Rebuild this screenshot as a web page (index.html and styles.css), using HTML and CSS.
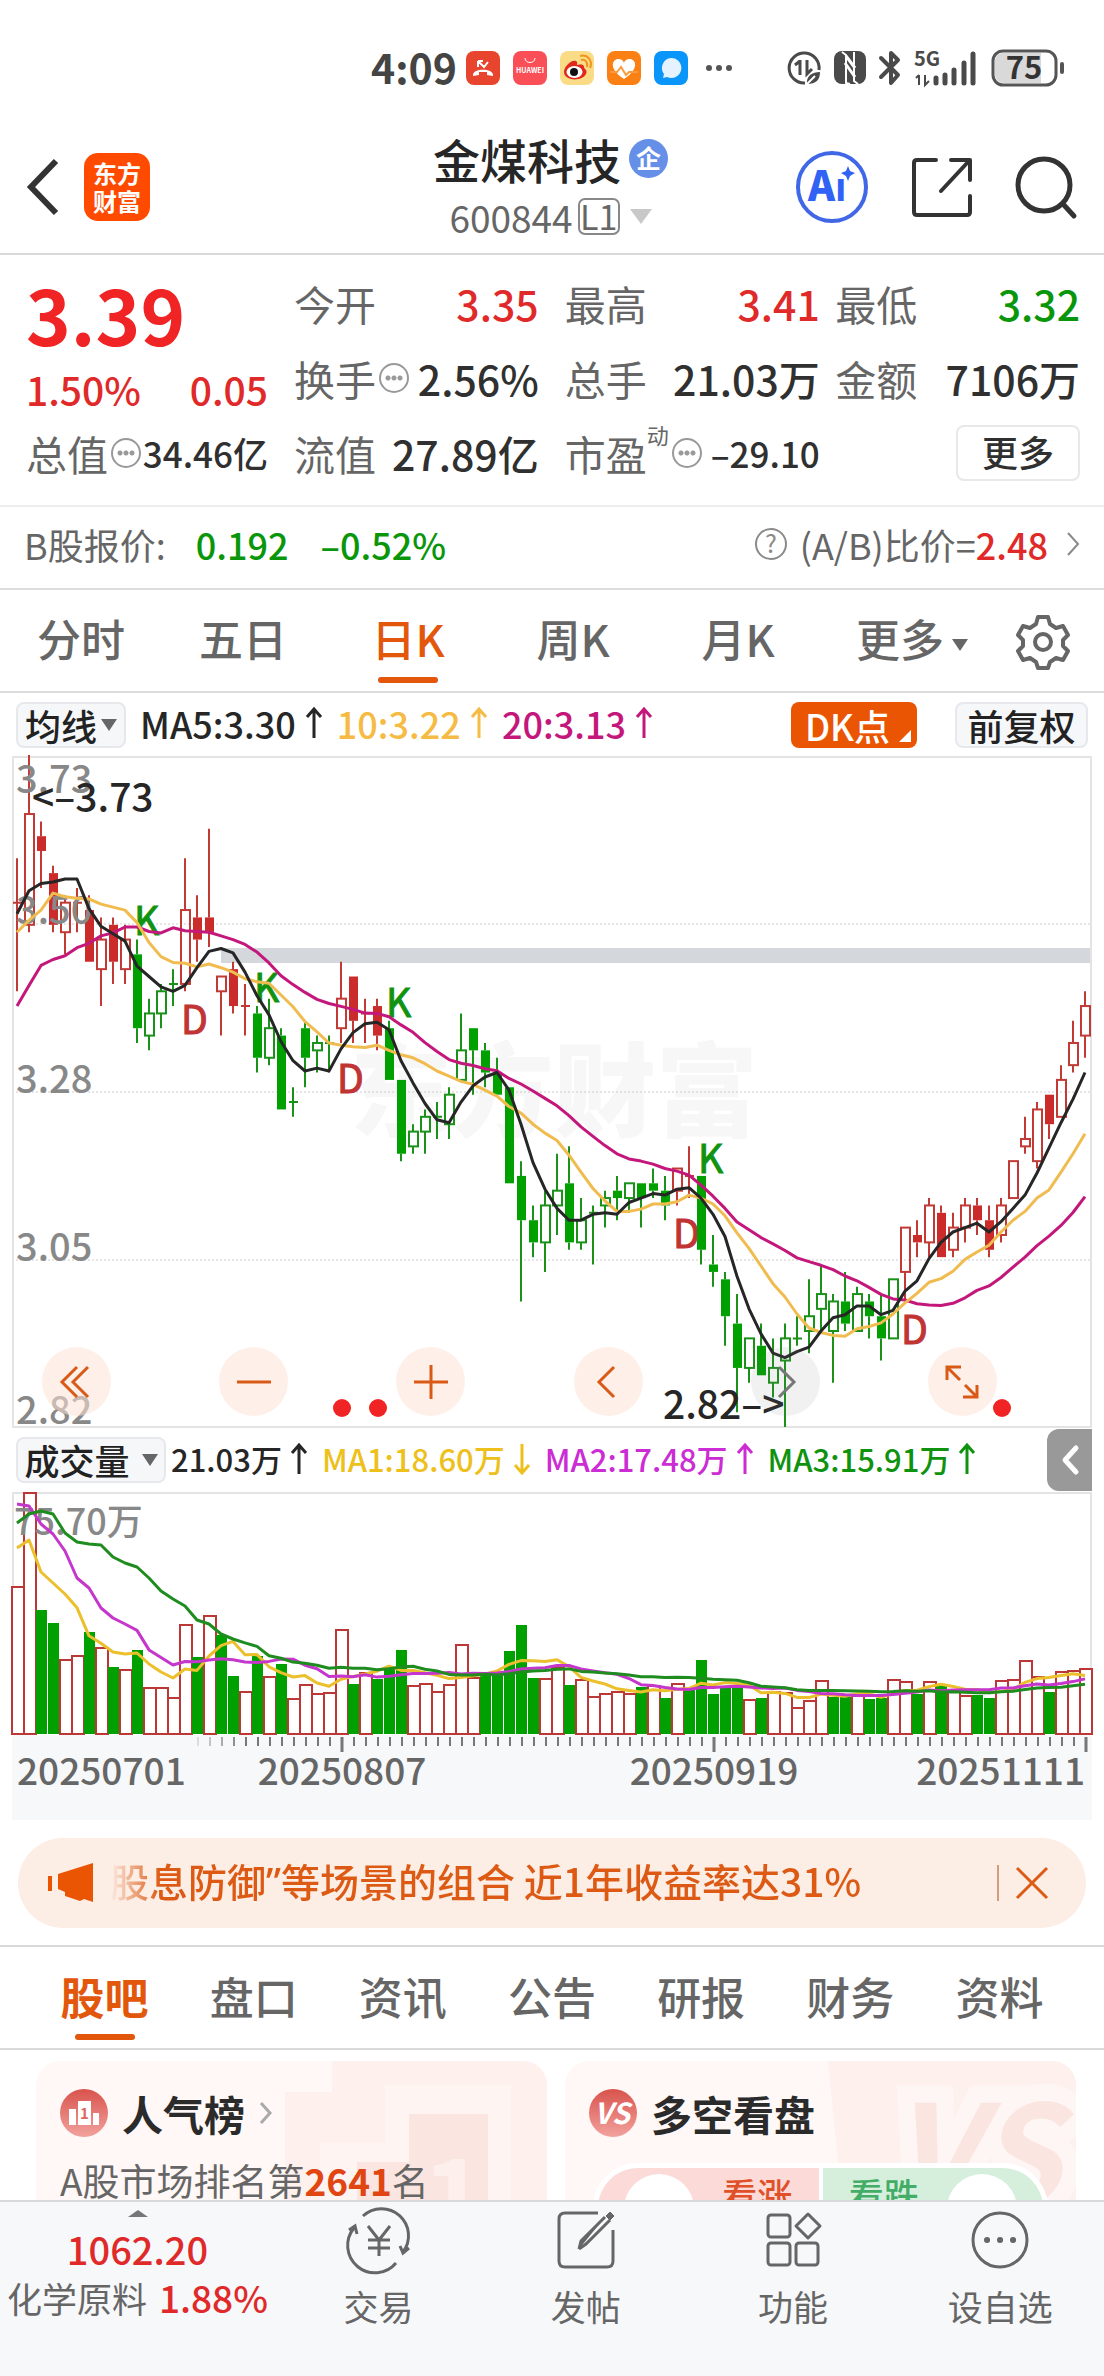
FILE: index.html
```html
<!DOCTYPE html>
<html lang="zh-CN">
<head>
<meta charset="utf-8">
<meta name="viewport" content="width=device-width">
<title>金煤科技 600844</title>
<link rel="stylesheet" href="styles.css">
</head>
<body>
<div class="app">
  <div class="status">
    <span class="clock">4:09</span>
    <svg class="app-ico" viewBox="0 0 34 34"><rect width="34" height="34" rx="8" fill="#e8452f"/><path d="M7 24c0-7 20-7 20 0v1l-6-1v-3h-8v3l-6 1z" fill="#fff"/><path d="M12 10v6M12 10h5M12 10l6 6 4-5" stroke="#fff" stroke-width="2" fill="none"/></svg>
    <svg class="app-ico" viewBox="0 0 34 34"><rect width="34" height="34" rx="8" fill="#fb4f57"/><path d="M12 7c0 6 10 6 10 0" stroke="#fff" fill="none"/><text x="17" y="22" font-size="7" font-weight="700" text-anchor="middle" fill="#fff">HUAWEI</text></svg>
    <svg class="app-ico" viewBox="0 0 34 34"><rect width="34" height="34" rx="8" fill="#fbdc86"/><path d="M4 21c0-6 8-13 12-11 2 1 1 4 1 4s7-2 7 2c0 2 4 3 2 7-4 8-22 7-22-2z" fill="#e0281c"/><ellipse cx="14.500" cy="21" rx="8" ry="6" fill="#fff"/><circle cx="14" cy="21" r="4" fill="#111"/><path d="M21 9c5-1 7 3 6 7M20 5c8-2 13 5 10 12" stroke="#f0951e" stroke-width="2" fill="none"/></svg>
    <svg class="app-ico" viewBox="0 0 34 34"><rect width="34" height="34" rx="8" fill="#fb8013"/><path d="M17 28C0 17 6 7 12 8c4 0 5 4 5 4s1-4 5-4c6-1 12 9-5 20z" fill="#fff"/><path d="M3 21h7l4-5 5 8 3-3h9" stroke="#fb9a3c" stroke-width="2" fill="none"/></svg>
    <svg class="app-ico" viewBox="0 0 34 34"><rect width="34" height="34" rx="8" fill="#0a95fb"/><path d="M17 7a10 10 0 1 1-4 19l-4 1 1-4A10 10 0 0 1 17 7z" fill="#e4f3ff"/></svg>
    <svg class="dots" viewBox="0 0 28 8"><circle cx="4" cy="4" r="3"/><circle cx="14" cy="4" r="3"/><circle cx="24" cy="4" r="3"/></svg>
    <div class="sys">
      <svg width="34" height="34" viewBox="0 0 34 34" fill="none" stroke="#4a4a4a" stroke-width="3"><path d="M18 32A15 15 0 1 1 32 19"/><path d="M13 9v15M8 14l5-4M20 9v14l5-5"/><path d="M20 33c-1-8 5-12 13-12 0 8-4 12-13 12z" fill="#4a4a4a" stroke="none"/><path d="M20 33l8-8" stroke="#fff" stroke-width="2"/></svg>
      <svg width="32" height="34" viewBox="0 0 32 34"><rect width="32" height="33" rx="8" fill="#4a4a4a"/><path d="M8 1l4 3v28l4 1" stroke="#fff" stroke-width="2" fill="none"/><path d="M24 33l-4-3V1" stroke="#fff" stroke-width="2" fill="none"/><path d="M11 12l10 14M12 5l9 12" stroke="#fff" stroke-width="3"/></svg>
      <svg width="22" height="36" viewBox="0 0 22 36" fill="none" stroke="#4a4a4a" stroke-width="4" stroke-linecap="round" stroke-linejoin="round"><path d="M2 8l17 17-7 8V3l7 7L2 27"/></svg>
      <svg width="64" height="36" viewBox="0 0 64 36"><text x="0" y="16" font-size="20" font-weight="700" fill="#4a4a4a">5G</text><path d="M5 25v10M2 28l3-3M11 25v10l4-4" stroke="#4a4a4a" stroke-width="2" fill="none"/><path d="M22 28v5M31 25v8M40 20v13M50 13v20M59 4v29" stroke="#4a4a4a" stroke-width="5" stroke-linecap="round"/></svg>
      <svg width="73" height="38" viewBox="0 0 73 38"><rect x="2" y="2" width="63" height="34" rx="10" fill="#fff" stroke="#555" stroke-width="3"/><path d="M12 4h38v30H12a8 8 0 0 1-8-8V12a8 8 0 0 1 8-8z" fill="#d9d9d9"/><path d="M71 15v8" stroke="#555" stroke-width="4" stroke-linecap="round"/><text x="33" y="30" font-size="31" font-weight="700" text-anchor="middle" fill="#333">75</text></svg>
    </div>
  </div>

  <header class="head">
    <div class="head-left">
      <button class="icon-btn" aria-label="返回"><svg width="36" height="58" viewBox="0 0 36 58" fill="none" stroke="#333" stroke-width="6"><path d="M32 3L7 29l25 26"/></svg></button>
      <div class="logo">东方<br>财富</div>
    </div>
    <div class="head-mid">
      <h1>金煤科技<span class="ent">企</span></h1>
      <div class="code">600844<span class="lv">L1</span><i class="tri light"></i></div>
    </div>
    <div class="head-right">
      <button class="icon-btn" aria-label="AI"><svg width="74" height="74" viewBox="0 0 74 74"><circle cx="37" cy="37" r="34" fill="none" stroke="#4068e6" stroke-width="4"/><text x="13" y="51" class="ai">Aı</text><path d="M53 16l2 5 5 2-5 3-2 5-2-5-5-3 5-2z" fill="#2f62f5"/></svg></button>
      <button class="icon-btn" aria-label="分享"><svg width="62" height="62" viewBox="0 0 62 62" fill="none" stroke="#333" stroke-width="4" stroke-linecap="round" stroke-linejoin="round"><path d="M25 4H6q-3 0-3 3v49q0 3 3 3h50q3 0 3-3V40M40 4h19v20M57 6L30 35"/></svg></button>
      <button class="icon-btn" aria-label="搜索"><svg width="62" height="62" viewBox="0 0 62 62" fill="none" stroke="#333" stroke-width="5"><circle cx="29" cy="29" r="26"/><path d="M48 48l11 12" stroke-linecap="round"/></svg></button>
    </div>
  </header>

  <section class="quote">
    <div class="q-col">
      <div class="price">3.39</div>
      <div class="cell up"><span>1.50%</span><span>0.05</span></div>
      <div class="cell small"><span class="lab">总值<i class="info"></i></span><span>34.46亿</span></div>
    </div>
    <div class="q-col">
      <div class="cell"><span class="lab">今开</span><span class="up">3.35</span></div>
      <div class="cell"><span class="lab">换手<i class="info"></i></span><span>2.56%</span></div>
      <div class="cell"><span class="lab">流值</span><span>27.89亿</span></div>
    </div>
    <div class="q-col">
      <div class="cell"><span class="lab">最高</span><span class="up">3.41</span></div>
      <div class="cell"><span class="lab">总手</span><span>21.03万</span></div>
      <div class="cell small"><span class="lab">市盈<sup>动</sup><i class="info"></i></span><span>–29.10</span></div>
    </div>
    <div class="q-col">
      <div class="cell"><span class="lab">最低</span><span class="down">3.32</span></div>
      <div class="cell"><span class="lab">金额</span><span>7106万</span></div>
      <div class="cell end"><button class="more">更多</button></div>
    </div>
  </section>

  <section class="bshare">
    <span>B股报价:</span><span class="down b1">0.192</span><span class="down b2">–0.52%</span>
    <span class="ratio"><svg width="34" height="34" viewBox="0 0 34 34"><circle cx="17" cy="17" r="15" fill="none" stroke="#8a8a8a" stroke-width="2"/><text x="17" y="26" font-size="25" text-anchor="middle" fill="#8a8a8a">?</text></svg>(A/B)比价=<b class="up">2.48</b><svg class="chev" width="14" height="26" viewBox="0 0 14 26" fill="none" stroke="#8a8a8a" stroke-width="2"><path d="M2 2l10 11L2 24"/></svg></span>
  </section>

  <nav class="ktabs">
    <a href="#m">分时</a><a href="#5">五日</a><a href="#d" class="on">日K</a><a href="#w">周K</a><a href="#mo">月K</a><a href="#more">更多<i class="tri dark"></i></a>
    <button class="icon-btn" aria-label="设置"><svg width="54" height="54" viewBox="0 0 54 54" fill="none" stroke="#666" stroke-width="4" stroke-linejoin="round"><path d="M22 3h10l2 7 6 4 7-2 5 9-5 5v6l5 5-5 9-7-2-6 4-2 6H22l-2-6-6-4-7 2-5-9 5-5v-6l-5-5 5-9 7 2 6-4z"/><circle cx="27" cy="28" r="8"/></svg></button>
  </nav>

  <section class="chart">
    <div class="bar">
      <button class="chip">均线<i class="tri dark"></i></button>
      <span class="v k">MA5:3.30<svg class="arr" viewBox="0 0 18 32"><path d="M9 31V2M2 10l7-8 7 8"/></svg></span>
      <span class="v y">10:3.22<svg class="arr" viewBox="0 0 18 32"><path d="M9 31V2M2 10l7-8 7 8"/></svg></span>
      <span class="v m">20:3.13<svg class="arr" viewBox="0 0 18 32"><path d="M9 31V2M2 10l7-8 7 8"/></svg></span>
      <button class="chip dk">DK点</button>
      <button class="chip fq">前复权</button>
    </div>
    <div class="plot">
      <svg id="kline" viewBox="0 0 1080 672" role="img" aria-label="日K线图">
        <text x="542" y="373" class="wm">东方财富</text>
        <path d="M0 168H1079M0 336H1079M0 504H1079" class="grid"/>
        <rect x="209" y="192" width="870" height="15" fill="#d4d8dd"/>
        <rect x="1" y="1" width="1078" height="670" class="frame"/>
        <g id="marks">
          <text x="122" y="179" class="kk">K</text><text x="242" y="246" class="kk">K</text><text x="374" y="261" class="kk">K</text><text x="686" y="417" class="kk">K</text>
          <text x="169" y="278" class="dd">D</text><text x="325" y="337" class="dd">D</text><text x="661" y="492" class="dd">D</text><text x="889" y="588" class="dd">D</text>
        </g>
        <g id="candles"></g>
        <g class="axis"><text x="4" y="37">3.73</text><text x="4" y="168">3.50</text><text x="4" y="337">3.28</text><text x="4" y="505">3.05</text><text x="4" y="668">2.82</text></g>
        <text x="20" y="56" class="ext">&lt;–3.73</text><text x="651" y="663" class="ext">2.82–&gt;</text>
        <g id="ma"></g>
      </svg>
      <div class="tools">
        <button aria-label="最早"><svg viewBox="0 0 34 34"><path d="M17 2L2 17l15 15M28 2L13 17l15 15"/></svg></button>
        <button aria-label="缩小"><svg viewBox="0 0 34 34"><path d="M0 17h34"/></svg></button>
        <button aria-label="放大"><svg viewBox="0 0 34 34"><path d="M0 17h34M17 0v34"/></svg></button>
        <button aria-label="前移"><svg viewBox="0 0 34 34"><path d="M23 2L8 17l15 15"/></svg></button>
        <button class="off" aria-label="后移"><svg viewBox="0 0 34 34"><path d="M11 2l15 15-15 15"/></svg></button>
        <button aria-label="全屏"><svg viewBox="0 0 34 34"><path d="M2 15V2h14M2 2l13 13M32 20v12H18M32 32L20 20"/></svg></button>
      </div>
      <i class="dot d1"></i><i class="dot d2"></i><i class="dot d3"></i>
    </div>
    <div class="bar vol">
      <button class="chip">成交量<i class="tri dark"></i></button>
      <span class="v k">21.03万<svg class="arr" viewBox="0 0 18 32"><path d="M9 31V2M2 10l7-8 7 8"/></svg></span>
      <span class="v y2">MA1:18.60万<svg class="arr" viewBox="0 0 18 32"><path d="M9 1v29M2 22l7 8 7-8"/></svg></span>
      <span class="v p">MA2:17.48万<svg class="arr" viewBox="0 0 18 32"><path d="M9 31V2M2 10l7-8 7 8"/></svg></span>
      <span class="v g">MA3:15.91万<svg class="arr" viewBox="0 0 18 32"><path d="M9 31V2M2 10l7-8 7 8"/></svg></span>
      <button class="fold" aria-label="收起"><svg width="18" height="30" viewBox="0 0 18 30" fill="none" stroke="#fff" stroke-width="5" stroke-linecap="round" stroke-linejoin="round"><path d="M15 3L4 15l11 12"/></svg></button>
    </div>
    <svg id="volume" viewBox="0 0 1080 328" role="img" aria-label="成交量图">
      <rect y="243" width="1080" height="85" fill="#f7f8fa"/>
      <path d="M1 243V1H1079V243" class="frame"/>
      <g id="bars"></g>
      <text x="2" y="43" class="unit">75.70万</text>
      <g id="vma"></g>
      <g id="ticks"></g>
      <g class="dates"><text x="5" y="293">20250701</text><text x="330" y="293" text-anchor="middle">20250807</text><text x="702" y="293" text-anchor="middle">20250919</text><text x="1073" y="293" text-anchor="end">20251111</text></g>
    </svg>
  </section>

  <div class="notice">
    <svg width="46" height="40" viewBox="0 0 46 40" fill="#ea5504"><path d="M0 13h4v15H0zM10 11L45 0v39l-9-3-4 2-15-5v-4l-7-3z"/></svg>
    <span class="marquee">股息防御<span class="q">”</span>等场景的组合 近1年收益率达31%</span>
    <button class="close" aria-label="关闭"><svg width="34" height="34" viewBox="0 0 34 34" stroke="#dd5a14" stroke-width="3"><path d="M2 2l30 30M32 2L2 32"/></svg></button>
  </div>

  <nav class="tabs2">
    <a href="#guba" class="on">股吧</a><a href="#pk">盘口</a><a href="#zx">资讯</a><a href="#gg">公告</a><a href="#yb">研报</a><a href="#cw">财务</a><a href="#zl">资料</a>
  </nav>

  <main class="cards">
    <article class="card">
      <svg class="deco" viewBox="0 0 262 180"><path d="M0 180V31h47V0h215v180z" fill="#fdf0ed"/><path d="M35 180V82h65V24h126v156z" fill="#fef5f2"/><path d="M72 180v-79h52V53h79v127z" fill="#fbe5e1"/><text x="137" y="180" font-size="110" font-weight="700" fill="#fdefec">1</text></svg>
      <h2><svg width="48" height="48" viewBox="0 0 48 48"><defs><linearGradient id="badge" x2="0" y2="1"><stop stop-color="#d9534d"/><stop offset="1" stop-color="#f2a29d"/></linearGradient></defs><circle cx="24" cy="24" r="24" fill="url(#badge)"/><path d="M9 20h7v16H9zM18 12h13v24H18zM33 24h6v12h-6z" fill="#fff"/><text x="20" y="30" font-size="15" font-weight="700" fill="#e06660">1</text></svg>人气榜<svg class="chev" width="14" height="24" viewBox="0 0 14 24" fill="none" stroke="#aaa" stroke-width="3"><path d="M2 2l9 10-9 10"/></svg></h2>
      <p>A股市场排名第<b>2641</b>名</p>
    </article>
    <article class="card">
      <svg class="deco" viewBox="0 0 262 180"><path d="M14 0h248v180H32z" fill="#fdf0ed"/><text x="76" y="144" font-size="138" font-weight="700" font-style="italic" fill="#fbe5e1" stroke="#fef6f4" stroke-width="34" paint-order="stroke">VS</text></svg>
      <h2><svg width="48" height="48" viewBox="0 0 48 48"><circle cx="24" cy="24" r="24" fill="url(#badge)"/><text x="23" y="35" font-size="29" font-weight="700" font-style="italic" text-anchor="middle" fill="#fff">VS</text></svg>多空看盘</h2>
      <div class="vs"><div class="bull"><i></i><span>看涨</span></div><div class="bear"><span>看跌</span><i></i></div></div>
    </article>
  </main>

  <footer class="foot">
    <a class="index" href="#index"><i class="caret"></i><b>1062.20</b><span>化学原料 <em>1.88%</em></span></a>
    <a href="#trade"><svg viewBox="0 0 66 60"><path d="M17 6A27 27 0 0 1 57 42M50 53A27 27 0 0 1 8 18M3 20l6-4 2 8M63 38l-6 5-3-7"/><path d="M22 16l11 14 11-14M33 30v16M22 30h22M22 38h22"/></svg>交易</a>
    <a href="#post"><svg viewBox="0 0 60 60"><path d="M42 3H9q-6 0-6 6v42q0 6 6 6h42q6 0 6-6V20"/><path d="M23 39l2-8L49 7M23 39l7-5L54 10" fill="#666"/><path d="M50 6l4-4 4 4-4 4z" fill="#666" stroke-width="1"/></svg>发帖</a>
    <a href="#func"><svg viewBox="0 0 60 60"><rect x="5" y="5" width="22" height="22" rx="3"/><rect x="5" y="33" width="22" height="22" rx="3"/><rect x="33" y="33" width="22" height="22" rx="3"/><path d="M45 4l12 12-12 12-12-12z" stroke-linejoin="round"/></svg>功能</a>
    <a href="#fav"><svg viewBox="0 0 60 60"><circle cx="30" cy="30" r="27"/><path d="M17 30h.1M30 30h.1M43 30h.1" stroke-width="6" stroke-linecap="round"/></svg>设自选</a>
  </footer>
</div>
<script src="chart.js"></script>
</body>
</html>
```
FILE: styles.css
```css
* { box-sizing: border-box; margin: 0; padding: 0; }
html, body { height: 100%; }
body { font-family: "Noto Sans CJK SC", sans-serif; font-weight: 500; color: #303030; background: #fff; overflow: hidden; }
svg { display: block; flex: none; overflow: visible; }
svg text { font-family: "Noto Sans CJK SC", sans-serif; }
a { color: inherit; text-decoration: none; }
button { font: inherit; color: inherit; background: none; border: 0; }
i, em { font-style: normal; }
.app { min-height: 100%; height: 100vh; display: flex; flex-direction: column; white-space: nowrap; }
.app > * { flex: none; }
.up { color: #e02a2a; }
.down { color: #0a960a; }
.tri { display: inline-block; flex: none; border: 8px solid transparent; border-bottom: 0; border-top: 12px solid #666; }
.tri.light { border-width: 15px 11px 0; border-top-color: #c8c8c8; margin-left: 10px; }
.icon-btn { display: flex; }

.status { display: flex; align-items: center; gap: 13px; height: 120px; padding: 16px 40px 0 371px; }
.clock { font-size: 41px; line-height: 48px; padding-bottom: 4px; font-weight: 700; color: #444; margin-right: -4px; }
.app-ico { width: 34px; height: 34px; }
.dots { width: 28px; height: 8px; fill: #555; margin-left: 4px; }
.sys { display: flex; align-items: center; gap: 13px; margin-left: auto; }

.head { display: grid; grid-template-columns: 1fr auto 1fr; align-items: center; height: 135px; padding: 0 27px 0 24px; border-bottom: 2px solid #d9d9d9; }
.head-left { display: flex; align-items: center; gap: 24px; }
.logo { width: 66px; height: 68px; border-radius: 14px; background: #ff4a00; color: #fff; font-size: 24px; line-height: 28px; font-weight: 700; text-align: center; padding-top: 6px; }
.head-mid { display: flex; flex-direction: column; align-items: center; }
.head-mid h1 { display: flex; align-items: center; gap: 8px; font-size: 47px; line-height: 60px; font-weight: 500; color: #262626; }
.ent { width: 39px; height: 39px; border-radius: 50%; background: #668fe8; color: #fff; font-size: 25px; line-height: 37px; text-align: center; font-weight: 700; }
.code { display: flex; align-items: center; font-size: 37px; line-height: 56px; color: #666; font-weight: 400; }
.lv { border: 2px solid #888; border-radius: 7px; width: 42px; height: 37px; line-height: 32px; font-size: 34px; text-align: center; margin-left: 5px; }
.head-right { display: flex; align-items: center; justify-content: flex-end; gap: 42px; }
.ai { font-size: 41px; font-weight: 900; fill: #2f62f5; }

.quote { display: grid; grid-template-columns: 242px repeat(3, minmax(0, 1fr)); column-gap: 26px; padding: 10px 24px 15px 26px; border-bottom: 2px solid #ececec; }
.q-col { display: grid; grid-template-rows: repeat(3, 75px); }
.price { font-size: 76px; line-height: 96px; font-weight: 700; color: #f02424; }
.cell { display: flex; align-items: center; justify-content: space-between; font-size: 41px; line-height: 60px; }
.lab { display: flex; align-items: center; color: #666; font-size: 41px; font-weight: 400; }
.small { font-size: 35px; }
.q-col:first-child .up { padding-top: 22px; font-size: 39px; }
.q-col:nth-child(3) .small { justify-content: flex-start; gap: 9px; }
.lab sup { font-size: 22px; line-height: 22px; align-self: flex-start; }
.info { flex: none; width: 30px; height: 30px; border: 2px solid #999; border-radius: 50%; margin-left: 3px; background: radial-gradient(circle, #999 0 2px, transparent 3px) 0 0 / 6px 100% repeat-x content-box; padding: 0 4px; }
.end { justify-content: flex-end; }
.more { width: 124px; height: 56px; border: 2px solid #e6e8ea; border-radius: 8px; font-size: 36px; line-height: 46px; padding-bottom: 4px; }

.bshare { display: flex; align-items: center; height: 83px; padding: 0 24px 7px; font-size: 36px; color: #666; font-weight: 400; border-bottom: 2px solid #dcdcdc; }
.bshare .down, .bshare b { font-weight: 500; }
.b1 { margin-left: 30px; }
.b2 { margin-left: 32px; }
.ratio { display: flex; align-items: center; margin-left: auto; }
.ratio svg:first-child { margin-right: 12px; }
.bshare .chev { margin-left: 18px; }

.ktabs { display: grid; grid-template-columns: 162fr 162fr 168fr 162fr 168fr 180fr 82fr; align-items: center; justify-items: center; height: 103px; padding: 0 20px 0 0; font-size: 44px; color: #666; border-bottom: 2px solid #dcdcdc; }
.ktabs a { position: relative; line-height: 97px; padding-bottom: 4px; }
.ktabs .tri { margin-left: 8px; vertical-align: middle; }
.on { color: #e2570c; }
.on::after { content: ""; position: absolute; left: 50%; bottom: 8px; width: 60px; height: 6px; margin-left: -30px; border-radius: 3px; background: #e2570c; }

.chart { padding: 0 12px; }
.chart > svg, .plot > svg { width: 100%; height: auto; }
.bar { display: flex; align-items: center; gap: 14px; height: 63px; padding: 0 4px; font-size: 36px; }
.chip { display: flex; align-items: center; justify-content: center; gap: 4px; height: 46px; padding: 0 7px; background: #f6f7f9; border: 2px solid #e6e8ec; border-radius: 8px; font-size: 36px; line-height: 40px; color: #222; }
.v { display: flex; align-items: center; gap: 9px; line-height: 46px; padding-bottom: 3px; }
.arr { width: 18px; height: 32px; fill: none; stroke: currentColor; stroke-width: 3; }
.k { color: #262626; } .y { color: #f5bb45; } .m { color: #c4177c; }
.y2 { color: #edc01c; } .p { color: #cb2cd3; } .g { color: #0f930f; }
.bar .dk { position: relative; margin-left: auto; width: 126px; background: #ea5504; border: 0; color: #fff; padding-right: 20px; }
.dk::after { content: ""; position: absolute; right: 6px; bottom: 6px; border: 6px solid transparent; border-right-color: #fff; border-bottom-color: #fff; }
.bar .fq { margin-left: 24px; width: 133px; }
.vol { height: 64px; gap: 14px; font-size: 31px; padding: 0; }
.vol .chip { margin-left: 4px; margin-right: -9px; width: 150px; gap: 12px; font-size: 35px; }
.vol .v { gap: 8px; }
.fold { display: flex; align-items: center; justify-content: center; margin-left: auto; width: 45px; height: 62px; background: #999; border-radius: 12px 0 0 12px; }

.plot { position: relative; }
.frame { fill: none; stroke: #e4e4e4; stroke-width: 2; }
.grid { stroke: #ccc; stroke-width: 1; stroke-dasharray: 2 2; }
.wm { font-size: 102px; font-weight: 900; fill: #f7f7f7; text-anchor: middle; }
.kk, .dd, .ext { font-size: 39px; font-weight: 400; }
.kk { fill: #109310; stroke: #109310; } .dd { fill: #c03434; stroke: #c03434; } .ext { font-weight: 500; fill: #262626; }
.axis { font-size: 38px; fill: #888; }
.unit { font-size: 36px; fill: #888; }
.dates { font-size: 37px; fill: #666; }
.tools { position: absolute; left: 30px; right: 95px; bottom: 12px; display: flex; justify-content: space-between; }
.tools button { display: flex; align-items: center; justify-content: center; width: 69px; height: 69px; border-radius: 50%; background: rgba(253, 228, 214, .55); }
.tools svg { width: 34px; height: 34px; fill: none; stroke: #d95a17; stroke-width: 3; }
.tools .off { background: rgba(120, 120, 120, .1); }
.tools .off svg { stroke: #777; }
.dot { position: absolute; bottom: 11px; width: 18px; height: 18px; border-radius: 50%; background: #f02424; }
.d1 { left: 321px; } .d2 { left: 357px; } .d3 { right: 81px; }

.notice { display: flex; align-items: center; height: 90px; margin: 18px 18px 17px; padding: 0 37px 0 30px; border-radius: 45px; background: #fcede5; color: #dd5a14; font-size: 39px; }
.marquee { margin-left: 16px; line-height: 60px; margin-bottom: 5px; background: linear-gradient(90deg, #fcede5, #dd5a14 50px); background-clip: text; -webkit-background-clip: text; color: transparent; }
.q { font-family: "Noto Sans", sans-serif; }
.close { display: flex; margin-left: auto; padding: 1px 0 1px 16px; border-left: 2px solid #d59b7c; }

.tabs2 { display: grid; grid-template-columns: repeat(7, 1fr); padding: 0 30px; text-align: center; height: 105px; border-top: 2px solid #d9d9d9; border-bottom: 2px solid #d9d9d9; font-size: 44px; color: #666; }
.tabs2 a { position: relative; line-height: 98px; }
.tabs2 .on { font-weight: 700; }

.app > .cards { flex: 1 1 0; min-height: 0; overflow: hidden; display: grid; grid-template-columns: 1fr 1fr; gap: 18px; align-items: start; padding: 11px 28px 0 36px; }
.card { position: relative; height: 300px; padding: 26px 24px; border-radius: 24px; background: #fff8f6; overflow: hidden; }
.deco { position: absolute; right: 0; top: 0; width: 262px; height: 180px; }
.card h2 { position: relative; display: flex; align-items: center; gap: 14px; font-size: 41px; line-height: 52px; font-weight: 700; color: #2b2b2b; }
.card p { position: relative; margin-top: 14px; font-size: 37px; line-height: 54px; font-weight: 400; color: #666; }
.card b { color: #e04512; }
.vs { position: relative; display: flex; gap: 4px; margin: 24px 4px 0; height: 90px; border: 5px solid #fff; border-radius: 48px; overflow: hidden; background: #fff; font-size: 35px; }
.vs div { flex: 1; display: flex; justify-content: center; gap: 28px; padding-top: 6px; }
.vs span { line-height: 40px; }
.vs i { width: 70px; height: 70px; border-radius: 50%; background: #fff; }
.bull { background: #fcdad7; color: #e0512a; }
.bear { background: #d5efdc; color: #43ad68; }

.foot { display: grid; grid-template-columns: 275px repeat(4, 1fr); height: 176px; padding-top: 8px; background: #f6f8fa; border-top: 2px solid #d9d9d9; color: #666; font-size: 35px; }
.foot a { display: flex; flex-direction: column; align-items: center; line-height: 44px; gap: 14px; font-weight: 400; }
.foot svg { height: 60px; fill: none; stroke: #666; stroke-width: 3; }
.foot .index { gap: 0; }
.caret { border: 10px solid transparent; border-top: 0; border-bottom: 7px solid #777; }
.foot b { margin-top: 8px; font-size: 38px; line-height: 48px; font-weight: 500; color: #e02a2a; }
.foot em { color: #e02a2a; font-weight: 500; font-size: 37px; margin-left: 4px; }
.foot .index span { line-height: 48px; }
```
FILE: chart.js
```js
// One row per day: high, body top, body bottom, low (in cents), kind.
// Kinds: r = red hollow, R = red solid, g = green hollow, G = green solid.
const days = `359 353 353 341 r|373 365 350 349 r|364 362 360 355 R|358 357 350 349 R|354 353 349 346 r|355 353 353 349 r|354 352 345 345 R|351 348 344 339 r|351 350 345 342 R|350 348 344 342 r
348 346 336 334 G|340 338 335 333 g|342 341 338 336 g|344 342 342 339 g|359 352 342 341 r|354 351 348 345 R|363 351 349 347 R|343 343 341 335 r|345 344 339 338 R|342 339 339 335 r
339 338 332 330 G|340 336 332 331 g|336 335 325 325 G|328 326 326 324 g|337 336 332 328 G|335 334 333 330 g|335 334 334 330 g|345 340 336 334 r|343 343 337 334 R|340 338 338 334 r
340 339 335 333 R|337 336 329 329 G|329 329 319 318 G|323 322 320 319 g|325 324 322 319 g|326 324 324 321 g|328 327 323 321 g|338 333 329 329 g|336 336 333 327 G|334 333 330 328 G
332 330 327 327 G|328 328 315 315 G|318 316 310 299 G|312 310 307 305 G|314 312 307 303 g|319 314 312 308 g|320 315 307 306 G|313 310 307 306 g|312 311 311 304 g|314 313 312 309 g
316 314 313 310 G|315 315 313 311 g|315 315 313 309 G|317 315 314 313 G|316 314 312 310 G|317 317 314 312 r|320 316 316 313 r|316 316 306 304 G|308 304 303 301 G|303 302 297 293 G
300 296 290 284 G|294 294 290 288 g|296 293 289 289 G|294 290 288 286 g|296 294 291 282 g|297 294 294 293 g|302 297 295 292 g|304 300 298 295 g|300 299 295 288 g|303 299 296 295 G
301 300 295 295 g|300 299 297 294 G|300 297 294 291 G|302 302 294 294 g|309 309 303 299 r|310 308 307 305 R|313 312 307 305 r|312 311 305 305 R|311 309 306 305 r|313 312 309 307 r
313 312 310 308 R|312 310 306 305 R|313 312 308 307 r|318 318 313 313 r|324 321 320 319 r|326 325 318 317 r|327 327 323 321 R|331 329 324 324 r|337 334 331 330 r|341 339 335 332 r`
  .split(/[|\n]/).map(s => { const p = s.trim().split(' '); return [+p[0], +p[1], +p[2], +p[3], p[4]]; });

// Daily volume as bar height, with the bar's colour.
const vols = `148r 242r 124g 111g 75r 79r 102g 87r 67g 65r 84g 47r 47r 37r 110r 77g 119r 99g 58g 43r 78g 58r 70g 36r 50r 41r 42r 105r 50g 62r 55g 67g 84g 49r 51r 43r 50r 90r 57r 59g 59g 83g 109g 56g 56r 67r 49g 55r 38r 41r 43r 41r 47g 49r 36g 51r 44g 74g 40g 48g 47g 35r 36g 43r 42r 27r 34r 54r 37g 37g 39r 35g 36g 55r 53r 40g 53r 48g 44r 39r 39g 36g 54r 55r 74r 58r 42g 63r 64r 66r`
  .split(' ').map(s => [parseInt(s), s.slice(-1)]);

const RED = '#c23a36', GREEN = '#1a921a';
const cx = i => 5 + 12 * i;
const py = p => 671 - (p - 282) * 7.385;
const put = (id, s) => { document.getElementById(id).innerHTML = s; };

put('candles', days.map(([h, t, b, l, k], i) => {
  const red = k === 'r' || k === 'R', c = red ? RED : GREEN, x = cx(i);
  if (t === b) return `<path d="M${x} ${py(h)}V${py(l)}M${x - 4} ${py(t)}H${x + 5}" stroke="${c}" stroke-width="2"/>`;
  const wick = `<path d="M${x} ${py(h)}V${py(t)}M${x} ${py(b)}V${py(l)}" stroke="${c}" stroke-width="2"/>`;
  const solid = k === 'R' || k === 'G';
  return wick + (solid
    ? `<rect x="${x - 4}" y="${py(t)}" width="9" height="${py(b) - py(t)}" fill="${red ? '#cb2b2b' : '#00a000'}"/>`
    : `<rect x="${x - 4}" y="${py(t)}" width="9" height="${py(b) - py(t)}" fill="none" stroke="${c}" stroke-width="2"/>`);
}).join(''));

// Moving average over n days; `seed` holds the days before the window is full.
const avg = (a, n, seed) => a.map((_, i) => i < n - 1 ? seed[i] : a.slice(i - n + 1, i + 1).reduce((s, v) => s + v, 0) / n);
const line = (a, y, c) => `<polyline points="${a.map((v, i) => cx(i) + ',' + y(v).toFixed(1)).join(' ')}" fill="none" stroke="${c}" stroke-width="3" stroke-linejoin="round"/>`;
const close = days.map(d => 'RG'.includes(d[4]) ? d[2] : d[1]);
put('ma',
  line(avg(close, 20, [339, 341.8, 344.5, 345.3, 345.8, 346.9, 347.5, 348.5, 348.9, 349.7, 349.7, 349.1, 348.9, 349.6, 349.2, 349.1, 349, 348.5, 348]), py, '#c4177c') +
  line(avg(close, 10, [349, 350.6, 352, 354.3, 353.8, 353.6, 353.5, 352.8, 352.4]), py, '#f0bc50') +
  line(avg(close, 5, [351.5, 354.6, 355.6, 355.8]), py, '#262626'));

const vy = v => 242 - v;
put('bars', vols.map(([v, k], i) => k === 'g'
  ? `<rect x="${cx(i) - 5}" y="${vy(v)}" width="11" height="${v}" fill="#00a000"/>`
  : `<rect x="${cx(i) - 5}" y="${vy(v) + 1}" width="12" height="${v - 1}" fill="#fff" stroke="#bb3836" stroke-width="2"/>`).join(''));
const vol = vols.map(v => v[0]);
put('vma',
  line(avg(vol, 5, [186, 194, 162, 151]), vy, '#ebc02c') +
  line(avg(vol, 10, [230, 228, 210, 200, 183, 156, 146, 126, 116]), vy, '#c436cc') +
  line(avg(vol, 20, [211, 220, 223, 220, 201, 192, 190, 189, 177, 171, 167, 156, 143, 135, 128, 114, 110, 100, 95]), vy, '#1e8c1e'));

let ticks = '';
for (let i = 15; i < 90; i++) {
  const big = i === 27 || i === 58 || i === 89;
  ticks += `<path d="M${cx(i) + 1} 245v${big ? 15 : 9}" stroke="#777" stroke-width="${big ? 3 : 2}" opacity="${Math.min(1, (i - 14) / 5)}"/>`;
}
put('ticks', ticks);
```
